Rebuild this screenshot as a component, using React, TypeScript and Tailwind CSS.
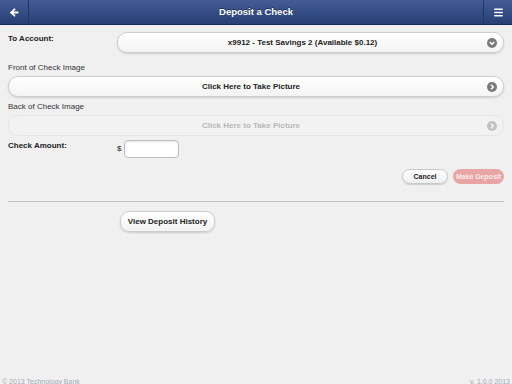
import { ArrowLeft, Menu } from 'lucide-react';

function CircleIcon({ dir, faded }: { dir: 'down' | 'right'; faded?: boolean }) {
  return (
    <svg width="10" height="10" viewBox="0 0 10 10" className={faded ? 'opacity-40' : ''}>
      <circle cx="5" cy="5" r="5" fill="#7a7a7a" />
      {dir === 'down' ? (
        <path d="M2.7 4 L5 6.3 L7.3 4" stroke="#fff" strokeWidth="1.5" fill="none" />
      ) : (
        <path d="M4 2.7 L6.3 5 L4 7.3" stroke="#fff" strokeWidth="1.5" fill="none" />
      )}
    </svg>
  );
}

function PillButton({
  label,
  icon,
  faded,
  padRight,
}: {
  label: string;
  icon: 'down' | 'right';
  faded?: boolean;
  padRight: string;
}) {
  return (
    <div
      className={`relative h-[21px] flex items-center justify-center rounded-[10px] border text-[8px] font-bold ${padRight} ${
        faded
          ? 'border-[#e6e6e6] bg-[#f2f2f2] text-[#b8b8b8]'
          : 'border-[#cfcfcf] bg-gradient-to-b from-white to-[#f4f4f4] text-[#222] shadow-[0_1px_2px_rgba(0,0,0,0.15)]'
      }`}
    >
      {label}
      <span className="absolute right-[6px] top-[5px] flex">
        <CircleIcon dir={icon} faded={faded} />
      </span>
    </div>
  );
}

export default function App() {
  return (
    <div
      className="w-[512px] h-[384px] overflow-hidden bg-[#f0f0f0] flex flex-col text-[#222]"
      style={{ fontFamily: '"Liberation Sans", Arial, sans-serif' }}
    >
      {/* Header */}
      <header className="h-[25px] flex items-stretch bg-gradient-to-b from-[#435d94] to-[#263f75] border-b border-[#142a57] text-white">
        <div className="w-[29px] flex items-center justify-center border-r border-[#1f3566]">
          <ArrowLeft className="w-[11px] h-[11px]" strokeWidth={4} />
        </div>
        <h1 className="flex-1 flex items-center justify-center text-[9.5px] font-bold [text-shadow:0_-1px_0_rgba(0,0,0,0.4)]">
          Deposit a Check
        </h1>
        <div className="w-[29px] flex items-center justify-center border-l border-[#1f3566]">
          <Menu className="w-[11px] h-[11px]" strokeWidth={3.5} />
        </div>
      </header>

      {/* Form */}
      <div className="px-[8px] pt-[7px] flex flex-col leading-[10px]">
        <div className="flex items-start">
          <div className="w-[109px] pt-[2px] text-[8px] font-bold">To Account:</div>
          <div className="flex-1">
            <PillButton label="x9912 - Test Savings 2 (Available $0.12)" icon="down" padRight="pr-[16px]" />
          </div>
        </div>

        <div className="mt-[10px] text-[8px] text-[#333]">Front of Check Image</div>
        <div className="mt-[3px]">
          <PillButton label="Click Here to Take Picture" icon="right" padRight="pr-[10px]" />
        </div>

        <div className="mt-[5px] text-[8px] text-[#333]">Back of Check Image</div>
        <div className="mt-[3px]">
          <PillButton label="Click Here to Take Picture" icon="right" faded padRight="pr-[10px]" />
        </div>

        <div className="mt-[4px] flex items-start">
          <div className="w-[109px] pt-[1px] text-[8px] font-bold">Check Amount:</div>
          <div className="flex items-center gap-[3px]">
            <span className="text-[8px]">$</span>
            <div className="w-[55px] h-[18px] rounded-[4px] border border-[#bdbdbd] bg-white shadow-[inset_0_1px_2px_rgba(0,0,0,0.1)]" />
          </div>
        </div>

        <div className="mt-[11px] flex justify-end gap-[5px]">
          <button className="w-[46px] h-[15px] rounded-full border border-[#c9c9c9] bg-gradient-to-b from-white to-[#efefef] text-[7px] font-bold text-[#222] shadow-[0_1px_1px_rgba(0,0,0,0.15)]">
            Cancel
          </button>
          <button className="w-[51px] h-[15px] rounded-full bg-[#e9a4a4] text-[7px] font-bold text-[#fbeaea]">
            Make Deposit
          </button>
        </div>

        <div className="mt-[17px] h-px bg-[#c2c2c2]" />

        <div className="mt-[9px] pl-[112px] flex">
          <button className="w-[95px] h-[21px] rounded-[9px] border border-[#cdcdcd] bg-gradient-to-b from-white to-[#f2f2f2] text-[8px] font-bold text-[#222] shadow-[0_1px_2px_rgba(0,0,0,0.15)]">
            View Deposit History
          </button>
        </div>
      </div>

      {/* Footer */}
      <footer className="mt-auto h-[6px] flex justify-between px-[2px] text-[7px] leading-none text-[#a4abb4]">
        <span>© 2013 Technology Bank</span>
        <span>v. 1.0.0 2013</span>
      </footer>
    </div>
  );
}
